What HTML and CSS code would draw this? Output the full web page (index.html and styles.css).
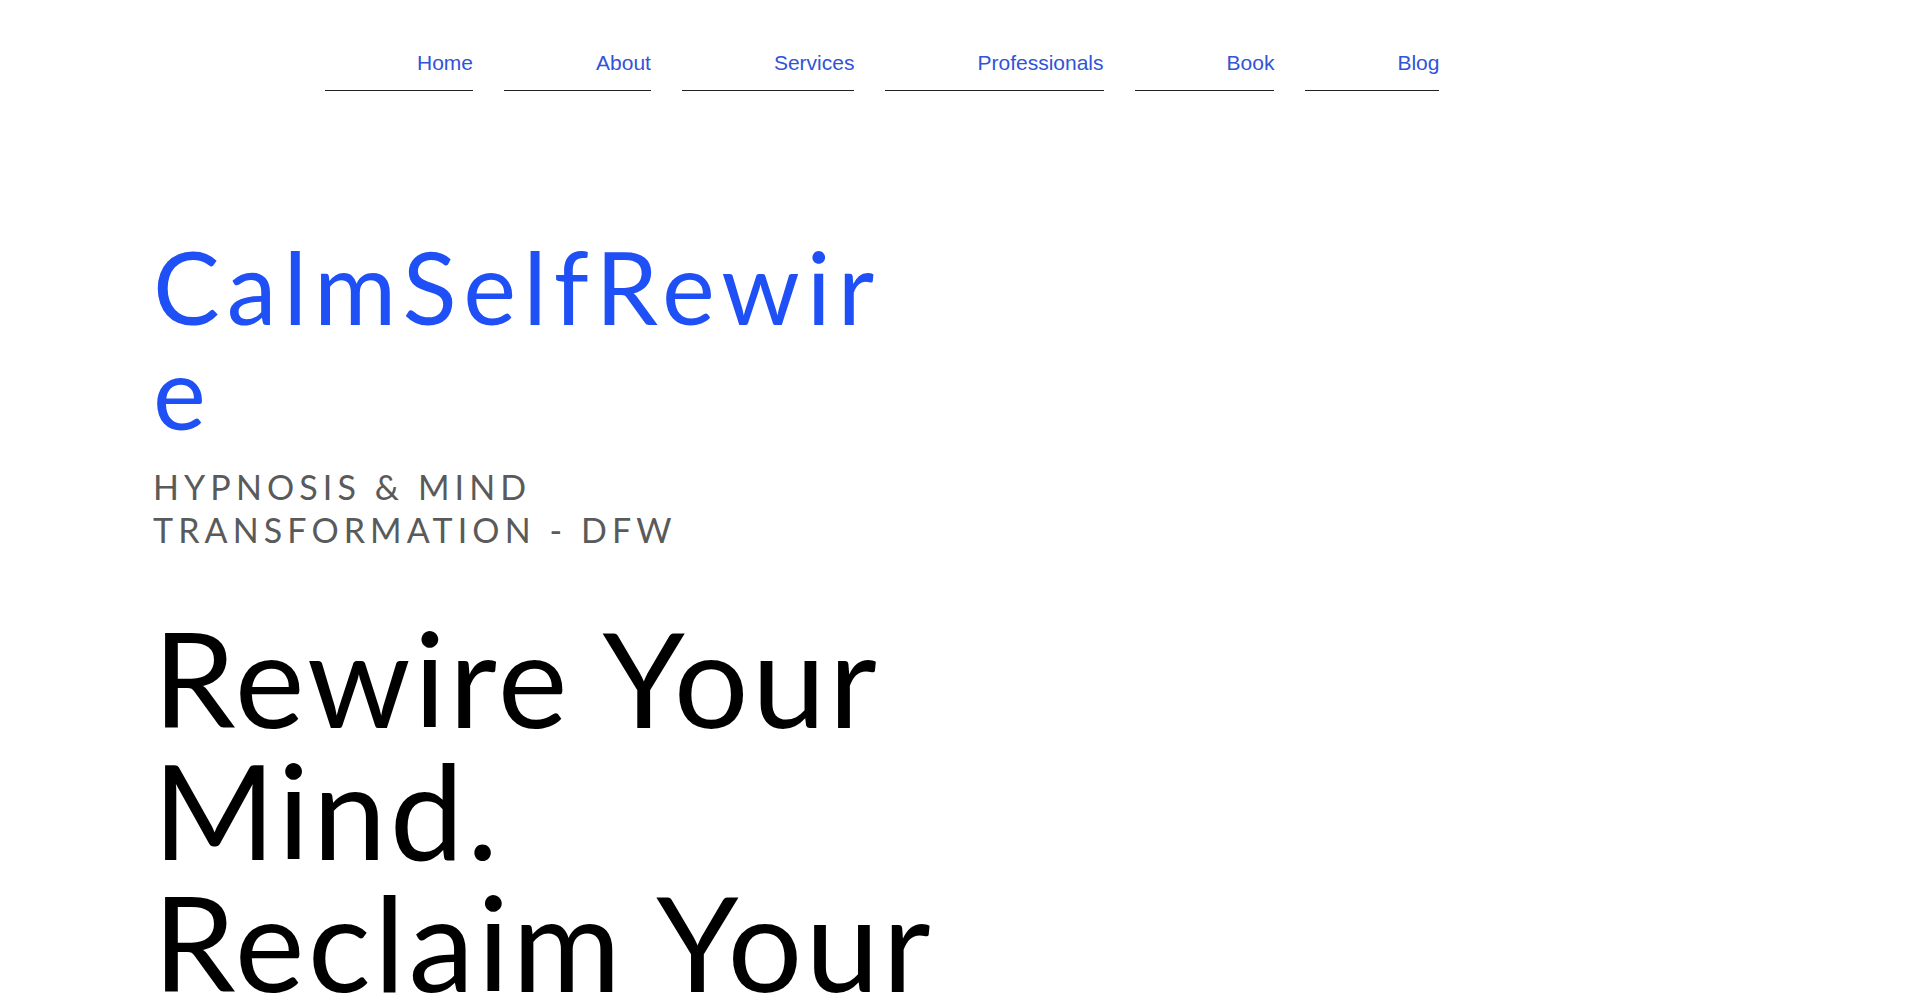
FILE: index.html
```html
<!DOCTYPE html>
<html lang="en">
<head>
<meta charset="utf-8">
<title>CalmSelfRewire</title>
<link rel="stylesheet" href="styles.css">
</head>
<body>
<header class="site-header">
  <nav class="nav">
    <a class="nav-item" href="#">Home</a>
    <a class="nav-item" href="#">About</a>
    <a class="nav-item" href="#">Services</a>
    <a class="nav-item" href="#">Professionals</a>
    <a class="nav-item" href="#">Book</a>
    <a class="nav-item" href="#">Blog</a>
  </nav>
</header>
<main class="hero">
  <h1 class="brand">CalmSelfRewire</h1>
  <p class="tagline">HYPNOSIS &amp; MIND<br>TRANSFORMATION - DFW</p>
  <h2 class="headline">Rewire Your Mind. Reclaim Your Life.</h2>
</main>
</body>
</html>
```

FILE: styles.css
```css
html, body {
  margin: 0;
  padding: 0;
  background: #ffffff;
}

body {
  font-family: "Lato", "Open Sans", sans-serif;
  overflow: hidden;
}

.site-header {
  padding: 51px 0 0 325px;
}

.nav {
  display: flex;
  gap: 31px;
}

.nav-item {
  display: block;
  padding: 0 0 15px 92px;
  border-bottom: 1px solid #222222;
  font-family: "Liberation Sans", Arial, sans-serif;
  font-size: 21px;
  line-height: 24px;
  color: #3153d9;
  text-decoration: none;
  text-align: right;
}

.hero {
  padding: 0 0 0 153px;
}

.brand {
  margin: 143px 0 0 0;
  width: 755px;
  font-size: 100px;
  line-height: 105px;
  font-weight: 400;
  letter-spacing: 0.07em;
  color: #1f50f5;
  word-break: break-all;
}

.tagline {
  margin: 21px 0 0 0;
  font-size: 34px;
  line-height: 43.3px;
  font-weight: 400;
  letter-spacing: 0.15em;
  color: #5a5a5a;
}

.headline {
  margin: 59px 0 0 0;
  width: 840px;
  font-size: 132px;
  line-height: 132px;
  font-weight: 400;
  letter-spacing: 0.025em;
  color: #000000;
}
```
